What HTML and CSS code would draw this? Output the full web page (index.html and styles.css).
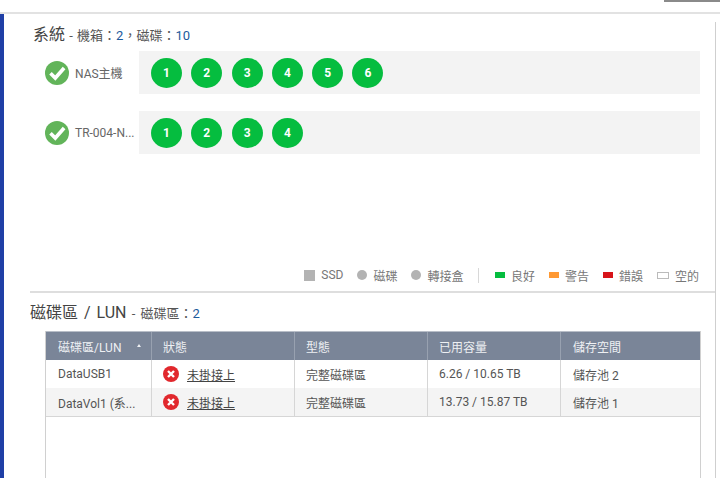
FILE: index.html
```html
<!DOCTYPE html>
<html lang="zh-Hant">
<head>
<meta charset="utf-8">
<title>系統</title>
<link rel="stylesheet" href="styles.css">
</head>
<body>
<div class="topbar"><div class="top-btn"></div></div>
<div class="frame">
  <div class="rail"></div>
  <main class="content">
    <section class="system">
      <h2 class="title"><span class="big">系統</span> - 機箱：<b>2</b>，磁碟：<b>10</b></h2>
      <div class="enclosure">
        <div class="enc-label">
          <svg class="ok" viewBox="0 0 24 24"><circle cx="12" cy="12" r="12" fill="#62b45a"/><path d="M5.5 12.2l4.8 4.8 8.8-10" fill="none" stroke="#fff" stroke-width="3.6"/></svg>
          <span class="enc-name">NAS主機</span>
        </div>
        <div class="slots">
          <span class="disk">1</span><span class="disk">2</span><span class="disk">3</span><span class="disk">4</span><span class="disk">5</span><span class="disk">6</span>
        </div>
      </div>
      <div class="enclosure">
        <div class="enc-label">
          <svg class="ok" viewBox="0 0 24 24"><circle cx="12" cy="12" r="12" fill="#62b45a"/><path d="M5.5 12.2l4.8 4.8 8.8-10" fill="none" stroke="#fff" stroke-width="3.6"/></svg>
          <span class="enc-name">TR-004-N...</span>
        </div>
        <div class="slots">
          <span class="disk">1</span><span class="disk">2</span><span class="disk">3</span><span class="disk">4</span>
        </div>
      </div>
      <div class="legend">
        <span class="lg"><i class="sw sq"></i>SSD</span>
        <span class="lg"><i class="sw dot"></i>磁碟</span>
        <span class="lg"><i class="sw dot"></i>轉接盒</span>
        <span class="sep"></span>
        <span class="lg"><i class="sw bar good"></i>良好</span>
        <span class="lg"><i class="sw bar warn"></i>警告</span>
        <span class="lg"><i class="sw bar err"></i>錯誤</span>
        <span class="lg"><i class="sw bar empty"></i>空的</span>
      </div>
    </section>
    <section class="volumes">
      <h2 class="title title2"><span class="big">磁碟區 / LUN</span> - 磁碟區：<b>2</b></h2>
      <div class="table">
        <div class="row head">
          <div class="c c1">磁碟區/LUN<i class="sort"></i></div>
          <div class="c c2">狀態</div>
          <div class="c c3">型態</div>
          <div class="c c4">已用容量</div>
          <div class="c c5">儲存空間</div>
        </div>
        <div class="row">
          <div class="c c1">DataUSB1</div>
          <div class="c c2"><svg class="bad" viewBox="0 0 16 16"><circle cx="8" cy="8" r="8" fill="#e1282d"/><path d="M5 5l6 6M11 5l-6 6" stroke="#fff" stroke-width="2.4"/></svg><a class="link">未掛接上</a></div>
          <div class="c c3">完整磁碟區</div>
          <div class="c c4">6.26 / 10.65 TB</div>
          <div class="c c5">儲存池 2</div>
        </div>
        <div class="row alt">
          <div class="c c1">DataVol1 (系...</div>
          <div class="c c2"><svg class="bad" viewBox="0 0 16 16"><circle cx="8" cy="8" r="8" fill="#e1282d"/><path d="M5 5l6 6M11 5l-6 6" stroke="#fff" stroke-width="2.4"/></svg><a class="link">未掛接上</a></div>
          <div class="c c3">完整磁碟區</div>
          <div class="c c4">13.73 / 15.87 TB</div>
          <div class="c c5">儲存池 1</div>
        </div>
      </div>
    </section>
  </main>
</div>
</body>
</html>
```
FILE: styles.css
```css
* { box-sizing: border-box; }
html, body { margin: 0; height: 100%; overflow: hidden; background: #fff; }
body {
  width: 720px;
  height: 478px;
  font-family: Roboto, "Noto Sans CJK TC", sans-serif;
  color: #555;
  font-size: 12px;
}
.topbar { height: 14px; border-bottom: 2px solid #e2e2e2; display: flex; justify-content: flex-end; }
.top-btn { width: 56px; height: 2px; background: #8a8a8a; }
.frame { display: flex; height: 464px; overflow: hidden; }
.rail { width: 4px; background: #1f3fa6; flex: none; }
.content {
  width: 712px;
  padding-left: 26px;
  background: linear-gradient(#cfcfcf, #cfcfcf) 711px 8px / 1px 100% no-repeat;
}
.system { height: 279px; border-bottom: 2px solid #dedede; width: 685px; }
.title { margin: 0; font-weight: 400; font-size: 13px; color: #555; line-height: 20px; word-spacing: 1px; }
.title b { font-weight: 400; color: #1c5a9c; }
.big { font-size: 16px; color: #444; }
.system > .title { padding: 11px 0 0 3px; height: 37px; }
.enclosure { display: flex; height: 43px; margin-bottom: 17px; }
.enc-label { width: 109px; padding-left: 15px; display: flex; align-items: center; gap: 6px; }
.ok { width: 24px; height: 24px; flex: none; }
.enc-name { font-size: 12px; color: #666; white-space: nowrap; }
.slots { width: 561px; background: #f3f3f3; display: flex; align-items: center; padding-left: 12px; gap: 9.3px; }
.disk {
  width: 31px; height: 30px; border-radius: 50%; background: #05bd3f; color: #fff;
  font-size: 12px; font-weight: 700; display: flex; align-items: center; justify-content: center;
}
.legend { display: flex; justify-content: flex-end; align-items: center; height: 18px; margin-top: 112px; padding-right: 16px; font-size: 12px; color: #777; }
.lg { display: flex; align-items: center; margin-left: 14px; }
.sep + .lg { margin-left: 15.5px; }
.sw { display: block; margin-right: 6px; }
.sq { width: 11px; height: 11px; background: #b3b3b3; }
.dot { width: 10px; height: 10px; border-radius: 50%; background: #b3b3b3; }
.sep { width: 1px; height: 15px; background: #d8d8d8; margin-left: 15px; }
.bar { width: 10px; height: 6px; }
.good { background: #05bd3f; }
.warn { background: #ff9933; }
.err { background: #d7141a; }
.empty { width: 12px; height: 7px; border: 1px solid #bbb; background: #fff; }
.title2 { height: 38px; padding-top: 10px; word-spacing: 2px; }
.volumes { width: 685px; height: 185px; }
.table { margin-left: 15px; width: 656px; height: 160px; border: 1px solid #d0d0d0; border-top: 0; }
.row { display: flex; height: 28px; font-size: 12px; color: #555; }
.row.head { height: 29px; background: #7a8598; color: #eef0f3; border-top: 1px solid #b8bec8; }
.row.alt { background: #f4f4f4; border-bottom: 1px solid #d6d6d6; height: 29px; }
.c { display: flex; align-items: center; padding-left: 11px; border-right: 1px solid #d6d6d6; white-space: nowrap; }
.head .c { border-right-color: #98a1b0; }
.c1 { width: 106px; position: relative; padding-left: 12px; }
.c2 { width: 143px; }
.c3 { width: 133px; }
.c4 { width: 133px; }
.c5 { flex: 1; border-right: 0; padding-left: 12px; }
.sort { position: absolute; right: 10px; top: 12px; width: 0; height: 0; border: 2.5px solid transparent; border-top: 0; border-bottom: 3px solid #eef0f3; }
.bad { width: 16px; height: 16px; margin-right: 8px; flex: none; }
.link { color: #444; text-decoration: underline; }
.c2 .link { margin-top: 1px; }
```
